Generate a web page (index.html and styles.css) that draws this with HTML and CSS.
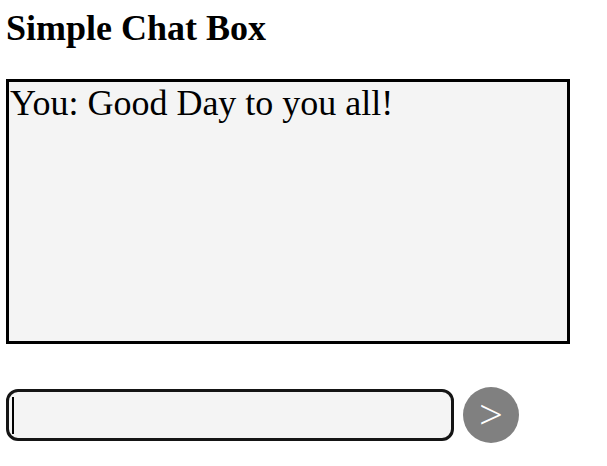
FILE: index.html
```html
<!DOCTYPE html>
<html>
<head>
<meta charset="utf-8">
<title>Simple Chat Box</title>
<link rel="stylesheet" href="styles.css">
</head>
<body>
<h2 class="title">Simple Chat Box</h2>
<div class="chat-log">You: Good Day to you all!</div>
<div class="composer">
  <div class="field">
    <input class="message-input" type="text" aria-label="Message">
    <span class="caret"></span>
  </div>
  <button class="send-btn" type="button">&gt;</button>
</div>
</body>
</html>
```
FILE: styles.css
```css
body {
  margin: 8px 6px;
  font-family: "Liberation Serif", "Times New Roman", serif;
  background: #ffffff;
  color: #000000;
}

.title {
  margin: 0 0 31px 0;
  font-size: 36px;
  font-weight: bold;
  line-height: 40px;
}

.chat-log {
  box-sizing: border-box;
  width: 564px;
  height: 265px;
  border: 3px solid #000000;
  background: #f4f4f4;
  padding: 1px 0 0 1px;
  font-size: 36px;
  line-height: 40px;
}

.composer {
  display: flex;
  align-items: center;
  gap: 9px;
  margin-top: 43px;
}

.field {
  position: relative;
  width: 448px;
  height: 52px;
}

.message-input {
  box-sizing: border-box;
  width: 100%;
  height: 100%;
  margin: 0;
  border: 3px solid #151515;
  border-radius: 12px;
  background: #f4f4f4;
  outline: none;
  padding: 0 4px;
  font-size: 36px;
  font-family: "Liberation Serif", serif;
}

.caret {
  position: absolute;
  left: 6px;
  top: 8px;
  width: 2px;
  height: 37px;
  background: #000000;
}

.send-btn {
  width: 56px;
  height: 56px;
  border: none;
  border-radius: 50%;
  background: #808080;
  color: #ffffff;
  padding: 0 0 3px 0;
  font-family: "Open Sans", "Liberation Sans", sans-serif;
  font-weight: 300;
  font-size: 42px;
  line-height: 1;
  text-align: center;
  display: flex;
  align-items: center;
  justify-content: center;
}
```
